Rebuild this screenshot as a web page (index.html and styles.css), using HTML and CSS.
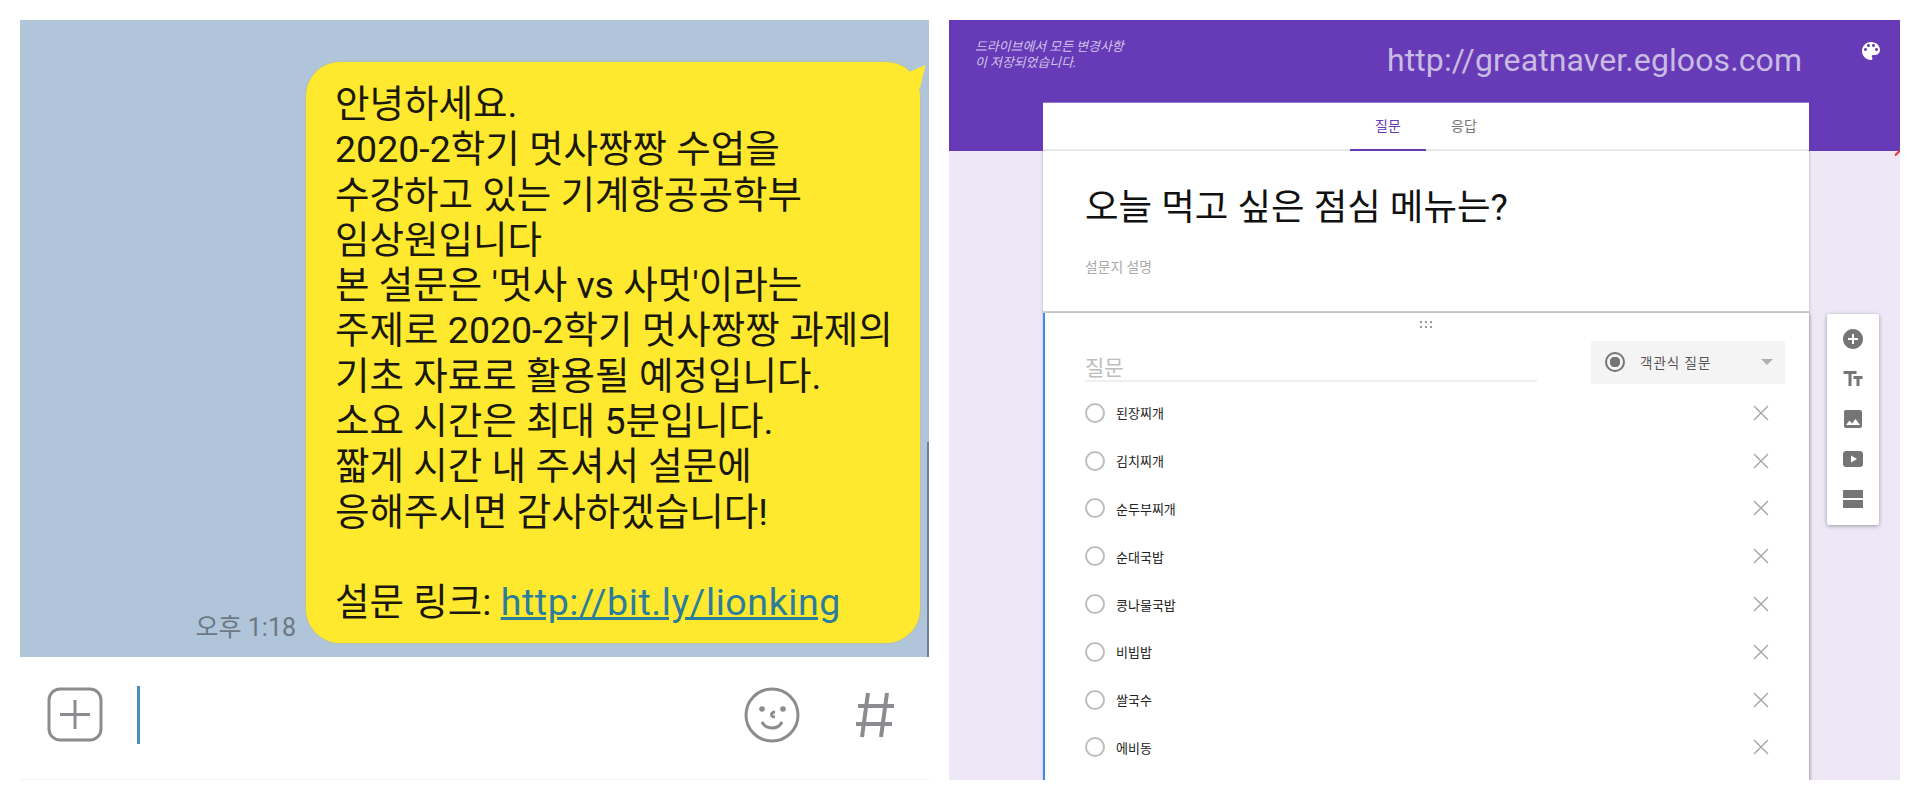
FILE: index.html
```html
<!DOCTYPE html>
<html lang="ko">
<head>
    <meta charset="UTF-8">
    <title>멋사 vs 사멋 설문</title>
    <link rel="stylesheet" href="styles.css">
</head>
<body>
    <div class="page">
        <section class="chat">
            <div class="chat-log">
                <span class="scrollbar"></span>
                <span class="time">오후 1:18</span>
                <div class="bubble">
                    <p>안녕하세요.</p>
                    <p>2020-2학기 멋사짱짱 수업을</p>
                    <p>수강하고 있는 기계항공공학부</p>
                    <p>임상원입니다</p>
                    <p>본 설문은 '멋사 vs 사멋'이라는</p>
                    <p>주제로 2020-2학기 멋사짱짱 과제의</p>
                    <p>기초 자료로 활용될 예정입니다.</p>
                    <p>소요 시간은 최대 5분입니다.</p>
                    <p>짧게 시간 내 주셔서 설문에</p>
                    <p>응해주시면 감사하겠습니다!</p>
                    <p>&nbsp;</p>
                    <p>설문 링크: <a class="link" href="#">http://bit.ly/lionking</a></p>
                </div>
            </div>
            <div class="chat-input">
                <svg class="input-icon" width="56" height="56" viewBox="0 0 56 56">
                    <rect x="2" y="2" width="52" height="51" rx="11" fill="none" stroke="#8c8c90" stroke-width="3"/>
                    <path d="M13 27.500h30M28 13v29" fill="none" stroke="#8c8c90" stroke-width="3"/>
                </svg>
                <span class="caret"></span>
                <svg class="input-icon smile" width="56" height="56" viewBox="0 0 56 56">
                    <circle cx="28" cy="28" r="26" fill="none" stroke="#8c8c90" stroke-width="3"/>
                    <circle cx="18" cy="22" r="2.800" fill="#8c8c90"/>
                    <circle cx="39" cy="22" r="2.800" fill="#8c8c90"/>
                    <path d="M31 25c-3 0-4 2-3 4 1 1 2 1 3 1M18 35c4 8 16 8 20 0" fill="none" stroke="#8c8c90" stroke-width="3"/>
                </svg>
                <svg class="input-icon" width="40" height="46" viewBox="0 0 40 46">
                    <path d="M13 1L7 45M32 1L26 45M3 14h36M1 32h36" fill="none" stroke="#8c8c90" stroke-width="4"/>
                </svg>
            </div>
        </section>

        <section class="form-editor">
            <span class="red-mark"></span>
            <header class="form-top">
                <p class="save-note">드라이브에서 모든 변경사항<br>이 저장되었습니다.</p>
                <h1 class="form-url">http://greatnaver.egloos.com</h1>
                <svg class="palette" width="24" height="24" viewBox="0 0 24 24">
                    <path fill="#fff" d="M12 3c-4.970 0-9 4.030-9 9s4.030 9 9 9c.830 0 1.500-.670 1.500-1.500 0-.390-.150-.740-.390-1.010-.230-.260-.380-.610-.380-.990 0-.830.670-1.500 1.500-1.500H16c2.760 0 5-2.240 5-5 0-4.420-4.030-8-9-8zm-5.500 9c-.830 0-1.500-.670-1.500-1.500S5.670 9 6.500 9 8 9.670 8 10.500 7.330 12 6.500 12zm3-4C8.670 8 8 7.330 8 6.500S8.670 5 9.500 5s1.500.670 1.500 1.500S10.330 8 9.500 8zm5 0c-.830 0-1.500-.670-1.500-1.500S13.670 5 14.500 5s1.500.670 1.500 1.500S15.330 8 14.500 8zm3 4c-.830 0-1.500-.670-1.500-1.500S16.670 9 17.500 9s1.500.670 1.500 1.500-.670 1.500-1.500 1.500z"/>
                </svg>
            </header>
            <div class="form-body">
                <div class="form-column">
                    <nav class="tabs">
                        <span class="tab active">질문</span>
                        <span class="tab">응답</span>
                    </nav>
                    <div class="title-card">
                        <h2 class="form-title">오늘 먹고 싶은 점심 메뉴는?</h2>
                        <p class="form-desc">설문지 설명</p>
                    </div>
                    <div class="question-card">
                        <svg class="drag" width="14" height="8" viewBox="0 0 14 8">
                            <path fill="#999" d="M0 0h2v2H0zM5 0h2v2H5zM10 0h2v2h-2zM0 5h2v2H0zM5 5h2v2H5zM10 5h2v2h-2z"/>
                        </svg>
                        <div class="question-head">
                            <div class="question-input">질문</div>
                            <div class="type-select">
                                <span class="radio checked"></span>
                                <span class="type-label">객관식 질문</span>
                                <span class="arrow"></span>
                            </div>
                        </div>
                        <ul class="options">
                            <li class="option"><span class="radio"></span><span class="option-text">된장찌개</span><svg class="remove" width="16" height="16" viewBox="0 0 16 16"><path d="M1 1l14 14M15 1L1 15" stroke="#aaa" stroke-width="1.500"/></svg></li>
                            <li class="option"><span class="radio"></span><span class="option-text">김치찌개</span><svg class="remove" width="16" height="16" viewBox="0 0 16 16"><path d="M1 1l14 14M15 1L1 15" stroke="#aaa" stroke-width="1.500"/></svg></li>
                            <li class="option"><span class="radio"></span><span class="option-text">순두부찌개</span><svg class="remove" width="16" height="16" viewBox="0 0 16 16"><path d="M1 1l14 14M15 1L1 15" stroke="#aaa" stroke-width="1.500"/></svg></li>
                            <li class="option"><span class="radio"></span><span class="option-text">순대국밥</span><svg class="remove" width="16" height="16" viewBox="0 0 16 16"><path d="M1 1l14 14M15 1L1 15" stroke="#aaa" stroke-width="1.500"/></svg></li>
                            <li class="option"><span class="radio"></span><span class="option-text">콩나물국밥</span><svg class="remove" width="16" height="16" viewBox="0 0 16 16"><path d="M1 1l14 14M15 1L1 15" stroke="#aaa" stroke-width="1.500"/></svg></li>
                            <li class="option"><span class="radio"></span><span class="option-text">비빕밥</span><svg class="remove" width="16" height="16" viewBox="0 0 16 16"><path d="M1 1l14 14M15 1L1 15" stroke="#aaa" stroke-width="1.500"/></svg></li>
                            <li class="option"><span class="radio"></span><span class="option-text">쌀국수</span><svg class="remove" width="16" height="16" viewBox="0 0 16 16"><path d="M1 1l14 14M15 1L1 15" stroke="#aaa" stroke-width="1.500"/></svg></li>
                            <li class="option"><span class="radio"></span><span class="option-text">에비동</span><svg class="remove" width="16" height="16" viewBox="0 0 16 16"><path d="M1 1l14 14M15 1L1 15" stroke="#aaa" stroke-width="1.500"/></svg></li>
                        </ul>
                    </div>
                </div>
                <aside class="toolbar">
                    <svg width="24" height="24" viewBox="0 0 24 24"><path fill="#757575" d="M12 2C6.480 2 2 6.480 2 12s4.480 10 10 10 10-4.480 10-10S17.520 2 12 2zm5 11h-4v4h-2v-4H7v-2h4V7h2v4h4v2z"/></svg>
                    <svg width="24" height="24" viewBox="0 0 24 24"><path fill="#757575" d="M2.500 4v3h5v12h3V7h5V4h-13zm19 5h-9v3h3v7h3v-7h3V9z"/></svg>
                    <svg width="24" height="24" viewBox="0 0 24 24"><path fill="#757575" d="M21 19V5c0-1.100-.9-2-2-2H5c-1.100 0-2 .9-2 2v14c0 1.100.9 2 2 2h14c1.100 0 2-.9 2-2zM8.500 13.500l2.500 3.010L14.500 12l4.500 6H5l3.500-4.500z"/></svg>
                    <svg width="24" height="24" viewBox="0 0 24 24"><path fill="#757575" d="M5 4h14c1.700 0 3 1.300 3 3v10c0 1.700-1.300 3-3 3H5c-1.700 0-3-1.300-3-3V7c0-1.700 1.300-3 3-3zm5 4.500v7l6-3.500z"/></svg>
                    <svg width="24" height="24" viewBox="0 0 24 24"><path fill="#757575" d="M2 3h20v8H2zM2 13h20v8H2z"/></svg>
                </aside>
            </div>
        </section>
    </div>
</body>
</html>
```

FILE: styles.css
```css
* {
    box-sizing: border-box;
}
body {
    margin: 0;
    background-color: #fff;
    font-family: Roboto, "Noto Sans CJK KR", sans-serif;
}
p, h1, h2, ul {
    margin: 0;
    padding: 0;
}
.page {
    display: flex;
    gap: 20px;
    height: 800px;
    padding: 20px;
    overflow: hidden;
}

/* chat */
.chat {
    display: flex;
    flex-direction: column;
    width: 909px;
    height: 760px;
}
.chat-log {
    position: relative;
    display: flex;
    justify-content: flex-end;
    align-items: flex-end;
    gap: 10px;
    height: 637px;
    padding: 42px 9px 14px 0;
    background-color: #b0c5d9;
}
.scrollbar {
    position: absolute;
    right: 0;
    bottom: 0;
    width: 2px;
    height: 215px;
    background-color: #6d8296;
}
.time {
    padding-bottom: 1px;
    font-size: 25px;
    line-height: 28px;
    color: #6c7884;
}
.bubble {
    position: relative;
    width: 614px;
    height: 581px;
    padding: 20px 0 0 29px;
    background-color: #ffe92e;
    border-radius: 34px;
    box-shadow: 0 0 2px #c9bc60;
    font-size: 37.500px;
    line-height: 45.300px;
    white-space: nowrap;
    color: #1a180c;
}
.bubble::after {
    content: "";
    position: absolute;
    top: 0;
    right: -6px;
    width: 26px;
    height: 26px;
    background-color: #ffe92e;
    clip-path: polygon(30% 40%, 98% 12%, 77% 100%, 30% 100%);
}
.link {
    letter-spacing: 0.600px;
    color: #2b7d9c;
}
.chat-input {
    display: flex;
    align-items: center;
    height: 123px;
    padding: 0 34px 6px 27px;
    background-color: #fff;
    border-bottom: 1px solid #f3f3f3;
}
.input-icon {
    flex: none;
}
.caret {
    width: 3px;
    height: 58px;
    margin-left: 34px;
    background-color: #4a90bd;
}
.smile {
    margin-left: auto;
    margin-right: 55px;
}

/* form editor */
.form-editor {
    position: relative;
    width: 951px;
    height: 760px;
    overflow: hidden;
    background: linear-gradient(#673ab7 131px, #ede7f6 131px);
}
.red-mark {
    position: absolute;
    top: 132px;
    right: -1px;
    width: 7px;
    height: 2px;
    background-color: #e53935;
    transform: rotate(-45deg);
}
.form-top {
    display: flex;
    align-items: flex-start;
    height: 82px;
    padding: 19px 0 0 26px;
}
.save-note {
    width: 412px;
    font-size: 12.900px;
    font-style: italic;
    line-height: 16px;
    white-space: nowrap;
    color: #d1c4e9;
}
.form-url {
    width: 414px;
    margin-top: 3px;
    font-size: 32px;
    font-weight: 400;
    line-height: 36px;
    letter-spacing: 0.100px;
    white-space: nowrap;
    color: #c9bce3;
}
.palette {
    margin: 0 0 0 58px;
}
.form-body {
    display: flex;
    align-items: flex-start;
    gap: 18px;
    padding-left: 94px;
}
.form-column {
    width: 766px;
}
.tabs {
    display: flex;
    justify-content: center;
    height: 49px;
    background-color: #fff;
    border-top: 1px solid #9575cd;
    border-bottom: 2px solid #eee;
}
.tab {
    width: 76px;
    height: 48px;
    text-align: center;
    font-size: 14px;
    line-height: 46px;
    color: #757575;
}
.tab.active {
    color: #673ab7;
    border-bottom: 2px solid #673ab7;
}
.title-card {
    height: 162px;
    padding: 36px 0 0 42px;
    background-color: #fff;
    border-bottom: 2px solid #cfcfcf;
    box-shadow: 0 1px 3px rgba(0, 0, 0, 0.25);
}
.form-title {
    font-size: 36.500px;
    font-weight: 400;
    line-height: 42px;
    color: #111;
}
.form-desc {
    margin-top: 29px;
    font-size: 13.800px;
    line-height: 18px;
    color: #aaa;
}
.question-card {
    position: relative;
    height: 470px;
    padding: 8px 24px 0 40px;
    background-color: #fff;
    border-left: 2px solid #4285f4;
    box-shadow: 1px 1px 3px rgba(0, 0, 0, 0.35);
}
.drag {
    display: block;
    margin: 0 auto;
    transform: translateX(-8px);
}
.question-head {
    display: flex;
    justify-content: space-between;
    height: 60px;
    padding-top: 12px;
}
.question-input {
    width: 452px;
    height: 41px;
    padding-top: 14px;
    font-size: 21px;
    line-height: 26px;
    color: #bdbdbd;
    border-bottom: 2px solid #eee;
}
.type-select {
    display: flex;
    align-items: center;
    width: 194px;
    height: 43px;
    padding: 0 0 2px 14px;
    background-color: #f4f4f4;
    border-radius: 2px;
}
.radio {
    flex: none;
    width: 20px;
    height: 20px;
    border: 2px solid #bdbdbd;
    border-radius: 50%;
}
.radio.checked {
    border-color: #757575;
    background: radial-gradient(circle, #757575 5px, transparent 5.500px);
}
.type-label {
    width: 101px;
    margin-left: 15px;
    font-size: 13.500px;
    letter-spacing: 1px;
    white-space: nowrap;
    color: #555;
}
.arrow {
    width: 0;
    height: 0;
    margin-left: 20px;
    border-left: 6px solid transparent;
    border-right: 6px solid transparent;
    border-top: 6px solid #b0b0b0;
}
.options {
    list-style: none;
}
.option {
    display: flex;
    align-items: center;
    height: 47.800px;
}
.option-text {
    margin-left: 11px;
    font-size: 13px;
    color: #222;
}
.remove {
    margin-left: auto;
    margin-right: 16px;
}
.toolbar {
    display: flex;
    flex-direction: column;
    gap: 16px;
    align-items: center;
    width: 52px;
    height: 211px;
    margin-top: 212px;
    padding-top: 13px;
    background-color: #fff;
    border-radius: 2px;
    box-shadow: 0 1px 4px rgba(0, 0, 0, 0.35);
}
```
